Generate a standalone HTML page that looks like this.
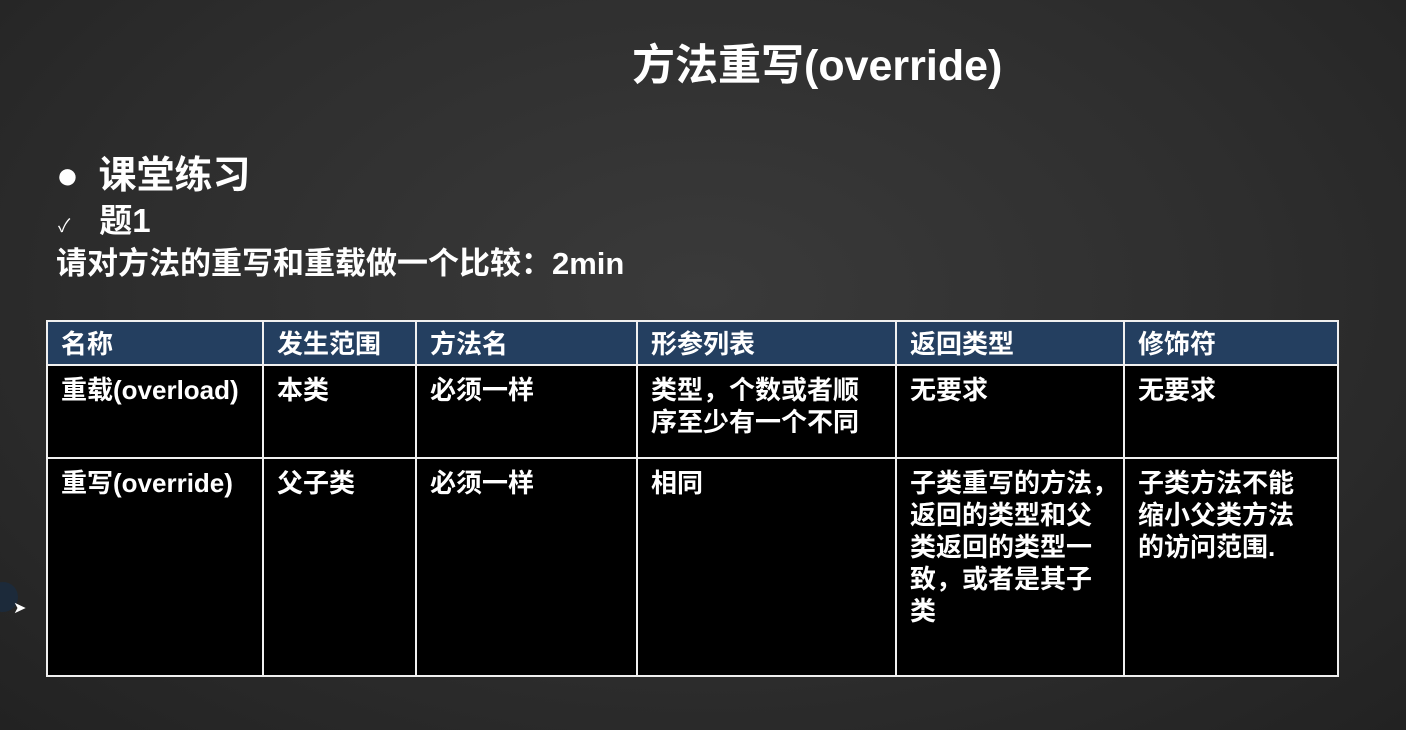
<!DOCTYPE html>
<html><head><meta charset="utf-8"><style>
body{margin:0;width:1406px;height:730px;overflow:hidden;background:radial-gradient(ellipse at 50% 40%,#3a3a3a 0%,#2e2e2e 55%,#222 100%);font-family:"Liberation Sans","Noto Sans CJK SC",sans-serif;font-weight:bold;color:#fff;position:relative}
.a{position:absolute;white-space:nowrap}
table{position:absolute;left:46px;top:320px;width:1293px;height:357px;border-collapse:collapse;table-layout:fixed}
td{border:2px solid #f0f0f0;vertical-align:top;padding:8px 4px 0 13px;font-size:26px;line-height:32px;background:#000;white-space:nowrap;overflow:hidden}
tr.h td{background:#243f60;height:40px;padding-top:2px;vertical-align:middle}
</style></head><body>
<div class="a" style="left:632px;top:31px;font-size:43px;">方法重写(override)</div>
<div class="a" style="left:56px;top:144px;font-size:38px;">●&nbsp;<span style="margin-left:9px">课堂练习</span></div>
<div class="a" style="left:58px;top:194px;font-size:33px;"><span style="font-size:18px;font-weight:normal">✓</span><span style="margin-left:29px">题1</span></div>
<div class="a" style="left:56px;top:238px;font-size:31px;">请对方法的重写和重载做一个比较：2min</div>
<table>
<colgroup><col style="width:216px"><col style="width:153px"><col style="width:221px"><col style="width:259px"><col style="width:228px"><col></colgroup>
<tr class="h"><td>名称</td><td>发生范围</td><td>方法名</td><td>形参列表</td><td>返回类型</td><td>修饰符</td></tr>
<tr style="height:93px"><td>重载(overload)</td><td>本类</td><td>必须一样</td><td>类型，个数或者顺<br>序至少有一个不同</td><td>无要求</td><td>无要求</td></tr>
<tr><td>重写(override)</td><td>父子类</td><td>必须一样</td><td>相同</td><td>子类重写的方法，<br>返回的类型和父<br>类返回的类型一<br>致，或者是其子<br>类</td><td>子类方法不能<br>缩小父类方法<br>的访问范围.</td></tr>
</table>
<div class="a" style="top:582px;width:30px;height:30px;border-radius:50%;background:#1c2a3a;left:-12px"></div>
<div class="a" style="left:13px;top:598px;font-size:16px;font-weight:normal">➤</div>
</body></html>
